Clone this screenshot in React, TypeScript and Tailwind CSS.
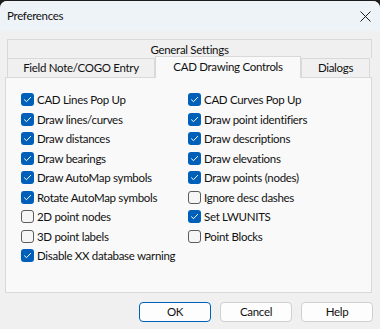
const LEFT: [string, boolean][] = [
  ['CAD Lines Pop Up', true],
  ['Draw lines/curves', true],
  ['Draw distances', true],
  ['Draw bearings', true],
  ['Draw AutoMap symbols', true],
  ['Rotate AutoMap symbols', true],
  ['2D point nodes', false],
  ['3D point labels', false],
  ['Disable XX database warning', true],
];

const RIGHT: [string, boolean][] = [
  ['CAD Curves Pop Up', true],
  ['Draw point identifiers', true],
  ['Draw descriptions', true],
  ['Draw elevations', true],
  ['Draw points (nodes)', true],
  ['Ignore desc dashes', false],
  ['Set LWUNITS', true],
  ['Point Blocks', false],
];

function Check({ label, on }: { label: string; on: boolean }) {
  return (
    <div className="flex items-center h-[19.5px]">
      {on ? (
        <span className="w-[13px] h-[13px] rounded-[3px] bg-[#005fb8] flex items-center justify-center flex-shrink-0">
          <svg width="9" height="9" viewBox="0 0 9 9" fill="none">
            <path d="M1.5 4.8 L3.5 6.7 L7.6 2.4" stroke="white" strokeWidth="1" strokeLinecap="round" strokeLinejoin="round" />
          </svg>
        </span>
      ) : (
        <span className="w-[13px] h-[13px] rounded-[3px] border border-[#5c5c5c] bg-[#f6f6f6] flex-shrink-0" />
      )}
      <span className="ml-[3px] whitespace-nowrap">{label}</span>
    </div>
  );
}

function Button({ label, primary }: { label: string; primary?: boolean }) {
  return (
    <div
      className={`w-[72px] h-[20px] rounded-[4px] bg-[#fdfdfd] flex items-center justify-center border ${primary ? 'border-[#005fb8]' : 'border-[#d0d0d0]'}`}
    >
      {label}
    </div>
  );
}

export default function App() {
  return (
    <div className="w-[380px] h-[329px] bg-[#1c1c1c] overflow-hidden">
      <div
        className="mt-px w-[380px] h-[328px] rounded-t-[7px] overflow-hidden bg-[#f0f0f0] flex flex-col text-[11.5px] tracking-[-0.3px] text-[#111]"
        style={{ fontFamily: 'Lato, "Noto Sans", sans-serif' }}
      >
        {/* title bar */}
        <div className="h-[30px] bg-[#eef3f8] flex items-center pl-[7px] pr-[9px] flex-shrink-0">
          <span>Preferences</span>
          <svg className="ml-auto" width="11" height="11" viewBox="0 0 11 11">
            <path d="M0.5 0.5 L10.5 10.5 M10.5 0.5 L0.5 10.5" stroke="#1a1a1a" strokeWidth="1" />
          </svg>
        </div>

        {/* tabs + panel */}
        <div className="px-[5px] pt-[8px]">
          <div className="pl-[2px]">
            <div className="w-[365px] h-[19px] border border-b-0 border-[#d9d9d9] flex items-center justify-center pt-[1px]">
              General Settings
            </div>
            <div className="flex items-end h-[19px]">
              <div className="w-[148px] h-[19px] border border-b-0 border-[#d9d9d9] flex items-center justify-center">
                Field Note/COGO Entry
              </div>
              <div className="w-[146px] h-[22px] -mt-[3px] bg-[#f9f9f9] border border-b-0 border-[#d9d9d9] flex items-center justify-center relative z-10 -mb-px pb-[2px]">
                CAD Drawing Controls
              </div>
              <div className="w-[69px] h-[19px] border border-b-0 border-[#d9d9d9] flex items-center justify-center">
                Dialogs
              </div>
            </div>
          </div>
          <div className="w-[367px] h-[216px] border border-[#d9d9d9] bg-[#f9f9f9] pl-[15px] pt-[12px] flex">
            <div className="w-[167px]">
              {LEFT.map(([l, on]) => (
                <Check key={l} label={l} on={on} />
              ))}
            </div>
            <div>
              {RIGHT.map(([l, on]) => (
                <Check key={l} label={l} on={on} />
              ))}
            </div>
          </div>
        </div>

        {/* buttons */}
        <div className="flex justify-end gap-[9px] pr-[7px] mt-[9px]">
          <Button label="OK" primary />
          <Button label="Cancel" />
          <Button label="Help" />
        </div>
      </div>
    </div>
  );
}
